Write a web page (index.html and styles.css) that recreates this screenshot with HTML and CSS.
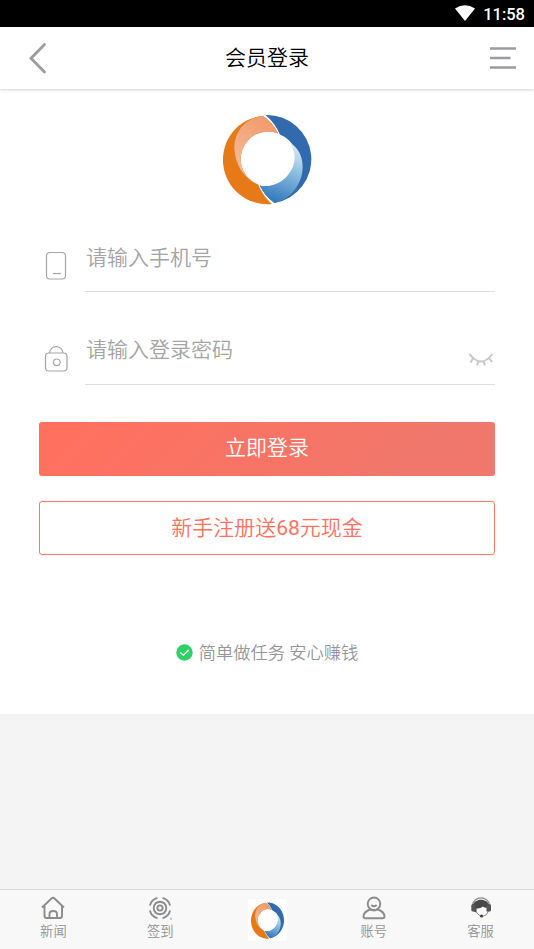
FILE: index.html
```
<!DOCTYPE html>
<html lang="zh-CN">
<head>
<meta charset="utf-8">
<title>会员登录</title>
<link rel="stylesheet" href="styles.css">
</head>
<body>
<svg class="defs" width="0" height="0" aria-hidden="true">
  <defs>
    <linearGradient id="peach" x1="0.7" y1="0" x2="0.2" y2="1"><stop offset="0" stop-color="#f09a6c"/><stop offset="1" stop-color="#f7c09c"/></linearGradient>
    <linearGradient id="sky" x1="0.6" y1="0" x2="0.3" y2="1"><stop offset="0" stop-color="#d3e8f5"/><stop offset="0.4" stop-color="#8bbde0"/><stop offset="1" stop-color="#2d75b9"/></linearGradient>
    <symbol id="logo" viewBox="36 252 272 272" preserveAspectRatio="none">
      <path fill="#e67a19" d="M155 257A132.500 132.500 0 0 0 182 521Q157 500 141 463A80 80 0 0 1 201 310Q185 278 155 257Z"/>
      <path fill="url(#peach)" d="M155 257C102 264 68 307 70 355C72 404 99 445 141 463A80 80 0 0 1 201 310Q185 278 155 257Z"/>
      <path fill="#316bad" d="M163 255A132.500 132.500 0 0 1 190 518Q160 497 146 466A80 80 0 0 0 206 313Q190 277 163 255Z"/>
      <path fill="url(#sky)" d="M236 338C257 350 274 374 274 410C274 462 238 507 190 518Q160 497 146 466C211 478 259 416 249 370Q245 350 236 338Z"/>
    </symbol>
  </defs>
</svg>
<div class="status">
  <svg width="20" height="16" viewBox="0 0 20 16"><path fill="#fff" d="M0 3.500Q10-3 20 3.500L10 16Z"/></svg>
  <span>11:58</span>
</div>
<header class="header">
  <svg class="back" width="18" height="32" viewBox="0 0 18 32"><path d="M15.500 2.500L2 16.200L15.500 30"/></svg>
  <h1>会员登录</h1>
  <svg class="menu" width="26" height="24" viewBox="0 0 26 24"><path d="M0 2.500H26M0 12H20.500M0 21.500H26"/></svg>
</header>
<main class="main">
  <svg class="logo" width="91" height="91"><use href="#logo"/></svg>
  <form class="form">
    <div class="row">
      <svg class="icon" width="24" height="30" viewBox="0 0 24 30"><rect x="2.500" y="1.500" width="19" height="26.500" rx="3.500"/><path d="M9 22.500H17"/></svg>
      <div class="field">请输入手机号</div>
    </div>
    <div class="row row-password">
      <svg class="icon" width="24" height="30" viewBox="0 0 24 30"><rect x="1.500" y="9" width="21.500" height="18" rx="3.500"/><path d="M5.500 9C6.500 .5 18 .5 19 9"/><circle cx="12.800" cy="18.300" r="3.300"/></svg>
      <div class="field">请输入登录密码
        <svg class="eye" width="26" height="16" viewBox="0 0 26 16"><path d="M1.500 2Q13 17 24.500 2M5 6.500L2.500 10.500M10.500 9.500L9 13.500M15.500 9.500L17 13.500M21 6L24 10"/></svg>
      </div>
    </div>
    <div class="button primary">立即登录</div>
    <div class="button outline">新手注册送<span class="amount">68</span>元现金</div>
  </form>
  <p class="note">
    <svg width="17" height="17" viewBox="0 0 17 17"><circle cx="8.500" cy="8.500" r="8.200" fill="#2fd066"/><path d="M4.300 8.500L7.300 11.200L12.800 6" fill="none" stroke="#fff" stroke-width="1.300"/></svg>
    <span>简单做任务 安心赚钱</span>
  </p>
</main>
<nav class="nav">
  <div class="tab">
    <svg width="26" height="24" viewBox="0 0 26 24"><path d="M2 11.500L11.500 2.500Q13 1.200 14.500 2.500L24 11.500M4.500 10V20Q4.500 22 6.500 22H20Q22 22 22 20V10M9.500 22V18C9.500 14 17 14 17 18V22"/></svg>
    <span>新闻</span>
  </div>
  <div class="tab">
    <svg width="26" height="24" viewBox="0 0 26 24"><circle cx="13" cy="12" r="2.600"/><circle cx="13" cy="12" r="6.300"/><path d="M2.900 9.500A10.400 10.400 0 0 1 10.500 1.900M15.500 1.900A10.400 10.400 0 0 1 23.100 9.500M23.100 14.500A10.400 10.400 0 0 1 15.500 22.100M10.500 22.100A10.400 10.400 0 0 1 2.900 14.500M23.500 22.800h1"/></svg>
    <span>签到</span>
  </div>
  <div class="tab home"><div class="home-tile"><svg width="34" height="37"><use href="#logo"/></svg></div></div>
  <div class="tab">
    <svg width="26" height="24" viewBox="0 0 26 24"><circle cx="13" cy="7.800" r="6.300"/><path d="M10.300 9Q13 11.500 15.700 9M9 13.500C5 15 2.500 17.500 2.500 20.500Q2.500 22.300 4.500 22.300H21.500Q23.500 22.300 23.500 20.500C23.500 17.500 21 15 17 13.500Q13 15.500 9 13.500"/></svg>
    <span>账号</span>
  </div>
  <div class="tab">
    <svg width="26" height="24" viewBox="0 0 26 24"><path d="M4.500 9C5.500-.5 20.500-.5 21.500 9" stroke-width="1.200"/><path d="M5 10C5.500 1.500 20.500 1.500 21 10V15.500H18.500V11.500Q16 12 15 10.500Q12 13 8.500 12.500V16.500Q5.500 16 5 14Z" fill="#484848" stroke="none"/><rect x="3.300" y="8" width="4" height="7.500" rx="1.600" fill="#555" stroke="none"/><rect x="19" y="8" width="4" height="7.500" rx="1.600" fill="#555" stroke="none"/><path d="M8 15.500Q9.500 18.500 12 19.500M20.500 15Q19.500 19.500 14.500 20.500" stroke-width="1"/><circle cx="13.500" cy="20" r="1.600" fill="#444" stroke="none"/></svg>
    <span>客服</span>
  </div>
</nav>
</body>
</html>
```
FILE: styles.css
```
* { box-sizing: border-box; }
body {
  margin: 0;
  height: 949px;
  display: flex;
  flex-direction: column;
  background: #f4f4f4;
  font-family: Roboto, "Noto Sans CJK SC", sans-serif;
  font-weight: 350;
  overflow: hidden;
}
svg { flex: none; display: block; }
.defs { position: absolute; }
.status {
  height: 27px;
  flex: none;
  background: #000;
  color: #fff;
  display: flex;
  align-items: center;
  justify-content: flex-end;
  gap: 8px;
  padding: 2px 9px 0 0;
  font: 500 16.5px/26px Roboto, sans-serif;
}
.status svg { margin-bottom: 3px; }
.header {
  height: 62px;
  flex: none;
  display: flex;
  align-items: center;
  justify-content: space-between;
  padding: 0 18px 0 29px;
  background: #fff;
  box-shadow: 0 1px 3px rgba(0, 0, 0, 0.18);
  z-index: 1;
}
.header h1 {
  margin: 0 3px 1px 0;
  font-size: 21px;
  line-height: 30px;
  font-weight: 350;
  color: #000;
}
.header path { fill: none; stroke: #9b9ba1; stroke-width: 2.4; }
.header .back path { stroke-width: 2.8; stroke-linecap: round; }
.main {
  height: 625px;
  flex: none;
  background: #fff;
  display: flex;
  flex-direction: column;
  align-items: center;
}
.logo { margin: 25px 0 0 2px; }
.form { width: 456px; margin-top: 29px; }
.row { display: flex; height: 58px; }
.row-password { margin-top: 35px; }
.icon { margin: 17px 0 0 5px; }
.icon * { fill: none; stroke: #a5a5aa; stroke-width: 1.2; }
.field {
  flex: 1;
  display: flex;
  justify-content: space-between;
  margin-left: 17px;
  padding: 9px 1px 0 1px;
  border-bottom: 1px solid #dedede;
  font-size: 21px;
  line-height: 30px;
  color: #a4a4a4;
}
.row-password .field { padding-top: 8px; }
.eye { margin-top: 17px; }
.eye path { fill: none; stroke: #c8c8c8; stroke-width: 2; }
.button {
  height: 54px;
  border-radius: 3px;
  text-align: center;
  font-size: 21px;
  line-height: 52px;
}
.primary {
  margin-top: 37px;
  color: #fff;
  background: linear-gradient(135deg, #ff705f 10%, #f0776b 80%);
}
.outline {
  margin-top: 25px;
  color: #ff705f;
  border: 1px solid #f97869;
}
.amount { font-weight: 400; }
.note {
  display: flex;
  align-items: center;
  gap: 6px;
  margin: 84px 0 0;
  font-size: 17.3px;
  line-height: 26px;
  color: #96969a;
}
.note span { padding-top: 1px; }
.note svg { margin-bottom: 1px; }
.nav {
  height: 60px;
  flex: none;
  margin-top: auto;
  display: flex;
  background: #f8f8f8;
  border-top: 1px solid #dcdcdc;
}
.tab {
  flex: 1;
  display: flex;
  flex-direction: column;
  align-items: center;
  padding-top: 6px;
  font-size: 13.3px;
  line-height: 20px;
  color: #929292;
}
.tab > svg { fill: none; stroke: #8c8c8c; stroke-width: 1.9; }
.tab span { margin-top: 2px; }
.home { padding-top: 9px; }
.home-tile {
  width: 39px;
  height: 42px;
  margin-left: 2px;
  border-radius: 3px;
  background: #fff;
  display: flex;
  align-items: center;
  justify-content: center;
}
```
